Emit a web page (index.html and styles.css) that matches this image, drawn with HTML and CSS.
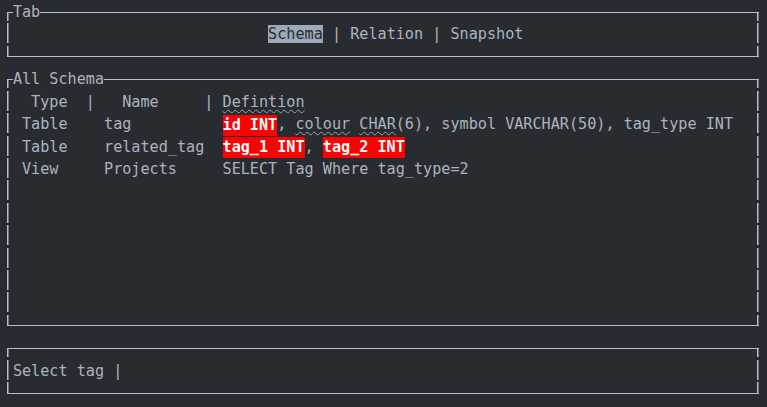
FILE: index.html
```html
<!DOCTYPE html>
<html lang="en">
<head>
<meta charset="utf-8">
<title>Schema TUI</title>
<link rel="stylesheet" href="styles.css">
</head>
<body>
<main class="screen">
  <section class="panel">
    <div class="p-top"><span class="p-title">Tab</span></div>
    <div class="p-row tabs"><span class="tab active">Schema</span> | <span class="tab">Relation</span> | <span class="tab">Snapshot</span></div>
    <div class="p-bottom"></div>
  </section>

  <section class="panel">
    <div class="p-top"><span class="p-title">All Schema</span></div>
    <div class="p-row grid head">
      <span class="hcell">  Type  |</span>
      <span class="hcell">   Name     |</span>
      <span class="hcell"> <span class="spell">Defintion</span></span>
    </div>
    <div class="p-row grid">
      <span class="cell">Table</span>
      <span class="cell">tag</span>
      <span class="cell"><span class="key">id INT</span>, <span class="spell">colour</span> <span class="spell">CHAR</span>(6), symbol VARCHAR(50), tag_type INT</span>
    </div>
    <div class="p-row grid">
      <span class="cell">Table</span>
      <span class="cell">related_tag</span>
      <span class="cell"><span class="key">tag_1 INT</span>, <span class="key">tag_2 INT</span></span>
    </div>
    <div class="p-row grid">
      <span class="cell">View</span>
      <span class="cell">Projects</span>
      <span class="cell">SELECT Tag Where tag_type=2</span>
    </div>
    <div class="p-row"></div>
    <div class="p-row"></div>
    <div class="p-row"></div>
    <div class="p-row"></div>
    <div class="p-row"></div>
    <div class="p-row"></div>
    <div class="p-bottom"></div>
  </section>

  <section class="panel">
    <div class="p-top"></div>
    <div class="p-row input">Select tag |</div>
    <div class="p-bottom"></div>
  </section>
</main>
</body>
</html>
```
FILE: styles.css
```css
:root {
  --R: 22.43px;
  --L: #b0bfcf;
  --bg: #282c31;
  --fg: #aab4bf;
}

html, body {
  margin: 0;
  padding: 0;
  background: var(--bg);
  overflow: hidden;
}

.screen {
  padding-top: 1px;
  font-family: "DejaVu Sans Mono", monospace;
  font-size: 15.15px;
  color: var(--fg);
}

.panel {
  margin-left: 6.7px;
  width: 752.3px;
}

.p-top,
.p-row,
.p-bottom {
  height: var(--R);
  line-height: var(--R);
  white-space: pre;
  background-repeat: no-repeat;
}

.p-top {
  display: flex;
  padding-left: 6.2px;
  background-image: linear-gradient(var(--L), var(--L)), linear-gradient(var(--L), var(--L)), linear-gradient(var(--L), var(--L));
  background-size: 100% 1px, 1.5px 9.4px, 1.5px 9.4px;
  background-position: 0 11px, 0 11px, 100% 11px;
}

.p-title {
  background: var(--bg);
}

.p-row {
  padding-left: 6.2px;
  background-image: linear-gradient(var(--L), var(--L)), linear-gradient(var(--L), var(--L));
  background-size: 1.5px 20.4px, 1.5px 20.4px;
  background-position: 0 0, 100% 0;
}

.p-bottom {
  background-image: linear-gradient(var(--L), var(--L)), linear-gradient(var(--L), var(--L)), linear-gradient(var(--L), var(--L));
  background-size: 100% 1px, 1.5px 11px, 1.5px 11px;
  background-position: 0 10.5px, 0 0, 100% 0;
}

.tabs {
  padding-left: calc(6.2px + 28ch);
}

.tab.active {
  background: #9ba9b8;
  color: #2a2e33;
}

.grid {
  display: grid;
  grid-template-columns: 9ch 13ch 1fr;
}

.cell {
  padding-left: 1ch;
}

.key {
  background: #ff0000;
  color: #ffffff;
  font-weight: bold;
  padding: 0.5px 0 2.5px;
}

.spell {
  text-decoration: underline wavy #97a3b0;
  text-decoration-thickness: 1px;
  text-underline-offset: 2px;
}
```
